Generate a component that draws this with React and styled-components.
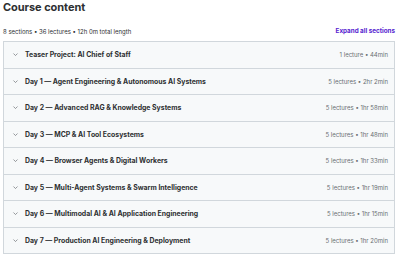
import React from "react";
import styled, { createGlobalStyle } from "styled-components";

const Global = createGlobalStyle`
  html, body { margin: 0; padding: 0; background: #fff; }
  body { font-family: "Inter", "Noto Sans", sans-serif; color: #2d2f31; }
`;

const Page = styled.div`
  width: 400px;
  padding: 0 5px 0 3px;
  box-sizing: border-box;
`;

const Title = styled.h2`
  margin: 0;
  font-size: 11px;
  font-weight: 700;
  line-height: 14px;
  letter-spacing: -0.05px;
`;

const MetaBar = styled.div`
  display: flex;
  justify-content: space-between;
  align-items: center;
  margin-top: 12px;
  height: 10px;
  font-size: 6px;
  color: #2d2f31;
`;

const Expand = styled.span`
  color: #5624d0;
  font-weight: 700;
  font-size: 6.3px;
`;

const Box = styled.div`
  margin-top: 5px;
  border: 1px solid #d1d7dc;
  border-bottom: none;
  width: 392px;
  box-sizing: border-box;
`;

const Row = styled.div`
  display: flex;
  align-items: center;
  height: 25.5px;
  background: #f7f9fa;
  border-bottom: 1px solid #d1d7dc;
  padding: 0 6px 0 8px;
`;

const Chevron = styled.svg`
  width: 7px;
  height: 7px;
  flex: none;
  margin-right: 6px;
`;

const RowTitle = styled.span`
  flex: 1;
  font-size: 6.9px;
  font-weight: 700;
  color: #2d2f31;
  white-space: nowrap;
`;

const RowMeta = styled.span`
  font-size: 6px;
  color: #6a6f73;
  white-space: nowrap;
`;

const sections = [
  ["Teaser Project: AI Chief of Staff", "1 lecture • 44min"],
  ["Day 1 — Agent Engineering & Autonomous AI Systems", "5 lectures • 2hr 2min"],
  ["Day 2 — Advanced RAG & Knowledge Systems", "5 lectures • 1hr 58min"],
  ["Day 3 — MCP & AI Tool Ecosystems", "5 lectures • 1hr 48min"],
  ["Day 4 — Browser Agents & Digital Workers", "5 lectures • 1hr 33min"],
  ["Day 5 — Multi-Agent Systems & Swarm Intelligence", "5 lectures • 1hr 19min"],
  ["Day 6 — Multimodal AI & AI Application Engineering", "5 lectures • 1hr 15min"],
  ["Day 7 — Production AI Engineering & Deployment", "5 lectures • 1hr 20min"],
];

export default function App() {
  return (
    <Page>
      <Global />
      <Title>Course content</Title>
      <MetaBar>
        <span>8 sections • 36 lectures • 12h 0m total length</span>
        <Expand>Expand all sections</Expand>
      </MetaBar>
      <Box>
        {sections.map(([t, m]) => (
          <Row key={t}>
            <Chevron viewBox="0 0 10 10">
              <path d="M2.5 4 L5 6.5 L7.5 4" fill="none" stroke="#6a6f73" strokeWidth="1" strokeLinecap="round" strokeLinejoin="round" />
            </Chevron>
            <RowTitle>{t}</RowTitle>
            <RowMeta>{m}</RowMeta>
          </Row>
        ))}
      </Box>
    </Page>
  );
}
